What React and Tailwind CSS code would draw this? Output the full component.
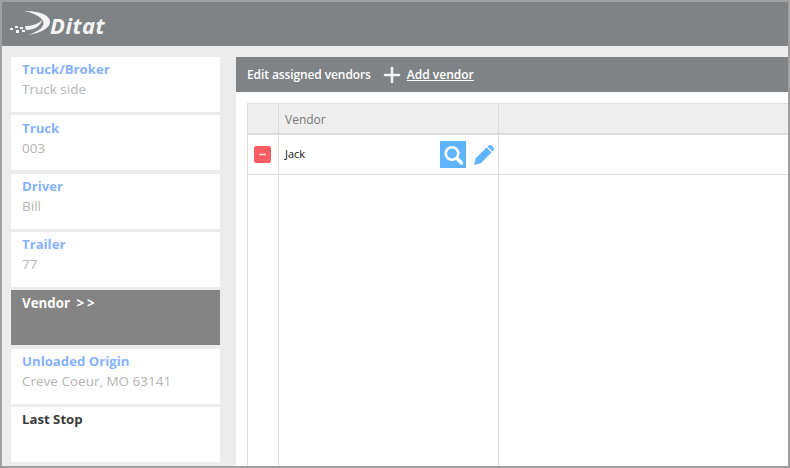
import { Plus, Minus } from 'lucide-react';

const STEPS = [
  { title: 'Truck/Broker', value: 'Truck side' },
  { title: 'Truck', value: '003' },
  { title: 'Driver', value: 'Bill' },
  { title: 'Trailer', value: '77' },
  { title: 'Vendor', active: true },
  { title: 'Unloaded Origin', value: 'Creve Coeur, MO 63141' },
  { title: 'Last Stop', dark: true },
];

function Logo() {
  return (
    <div className="flex items-center">
      <svg width="44" height="28" viewBox="0 0 44 28" fill="#f4f4f4">
        <path d="M15 1 C28 1 40 4 41 11 C42 17 33 23 19 25 C31 21 36 16 34 11 C32 7 25 3 15 1 Z" />
        <path d="M16 16 C23 16 29 14 33 10 C32 16 25 20 17 20 Z" />
        <rect x="1" y="18" width="3" height="2" />
        <rect x="6" y="16" width="3" height="2" />
        <rect x="7" y="20" width="3" height="3" />
        <rect x="11" y="17" width="3" height="2" />
        <rect x="13" y="20" width="3" height="2" />
      </svg>
      <span className="-ml-[3px] mt-[2px] text-[22px] leading-none font-bold italic tracking-[0.5px] text-[#f4f4f4]">Ditat</span>
    </div>
  );
}

function StepCard({ step }) {
  if (step.active) {
    return (
      <div className="h-[55px] bg-[#848484] px-[11px] pt-[4px] text-[13.3px] leading-[18px] font-bold text-white">
        {step.title} <span className="ml-[3px] tracking-[3px]">&gt;&gt;</span>
      </div>
    );
  }
  return (
    <div className="h-[55px] bg-white px-[11px] pt-[3.4px]">
      <div className={`text-[13.2px] leading-[18px] font-bold ${step.dark ? 'text-[#3a3a3a]' : 'text-[#85b2ff]'}`}>{step.title}</div>
      <div className="mt-[2px] text-[13.5px] leading-[18px] text-[#b4b4b4]">{step.value}</div>
    </div>
  );
}

export default function App() {
  return (
    <div className="flex h-[468px] w-[790px] flex-col overflow-hidden border-2 border-[#a0a0a0] bg-[#ececec] font-['Open_Sans',sans-serif]">
      <header className="flex h-[44px] shrink-0 items-center bg-[#808386] pl-[7px]">
        <Logo />
      </header>

      <div className="flex min-h-0 flex-1 pt-[11px]">
        <aside className="ml-[9px] flex w-[209px] shrink-0 flex-col gap-[3.33px]">
          {STEPS.map((s) => <StepCard key={s.title} step={s} />)}
        </aside>

        <main className="ml-[16px] flex min-w-0 flex-1 flex-col bg-white">
          <div className="flex h-[35px] shrink-0 items-center bg-[#808386] pl-[11px] text-[12px] font-semibold text-white">
            <span className="tracking-[-0.1px]">Edit assigned vendors</span>
            <Plus size={24} strokeWidth={2.6} className="ml-[9px] text-[#f0f0f0]" />
            <span className="ml-[3px] underline">Add vendor</span>
          </div>

          <div className="ml-[11px] mt-[11px] flex min-h-0 flex-1 flex-col border-l border-t border-[#dcdcdc]">
            <div className="flex h-[31px] shrink-0 border-b-2 border-[#dcdcdc] bg-[#eeeeee]">
              <div className="w-[31px] shrink-0 border-r border-[#dcdcdc]" />
              <div className="flex w-[220px] shrink-0 items-center border-r border-[#dcdcdc] pl-[6px] pt-[2px] text-[12px] text-[#777777]">Vendor</div>
              <div className="flex-1" />
            </div>

            <div className="flex h-[40px] shrink-0 border-b border-[#dcdcdc]">
              <div className="flex w-[31px] shrink-0 items-center justify-center border-r border-[#dcdcdc] pr-[2px]">
                <div className="flex h-[17px] w-[17px] items-center justify-center rounded-[2px] bg-[#ff5d63]">
                  <Minus size={9} strokeWidth={3.5} className="text-[#ffe8e8]" />
                </div>
              </div>
              <div className="flex w-[220px] shrink-0 items-center border-r border-[#dcdcdc] pl-[6px] pr-[3px] text-[11px] text-[#111111]">
                <span className="flex-1">Jack</span>
                <div className="flex h-[27px] w-[26px] items-center justify-center bg-[#5fb4ff]">
                  <svg width="20" height="20" viewBox="0 0 20 20" fill="none" stroke="#ffffff">
                    <circle cx="9" cy="8.5" r="6.3" strokeWidth="2.6" />
                    <path d="M13.8 13.3 L18.5 18" strokeWidth="3.6" strokeLinecap="round" />
                  </svg>
                </div>
                <svg width="20" height="20" viewBox="0 0 20 20" fill="#5fb4ff" className="ml-[8px] mr-[1px]">
                  <path d="M0 20 L1.5 13.5 L12.5 2.5 L17.5 7.5 L6.5 18.5 Z" />
                  <path d="M13.5 1.5 L14.5 0.6 C15.4 -0.2 16.6 -0.2 17.5 0.6 L19.4 2.5 C20.2 3.4 20.2 4.6 19.4 5.5 L18.5 6.5 Z" />
                </svg>
              </div>
              <div className="flex-1" />
            </div>

            <div className="flex min-h-0 flex-1">
              <div className="w-[31px] shrink-0 border-r border-[#dcdcdc]" />
              <div className="w-[220px] shrink-0 border-r border-[#dcdcdc]" />
            </div>
          </div>
        </main>
      </div>
    </div>
  );
}
